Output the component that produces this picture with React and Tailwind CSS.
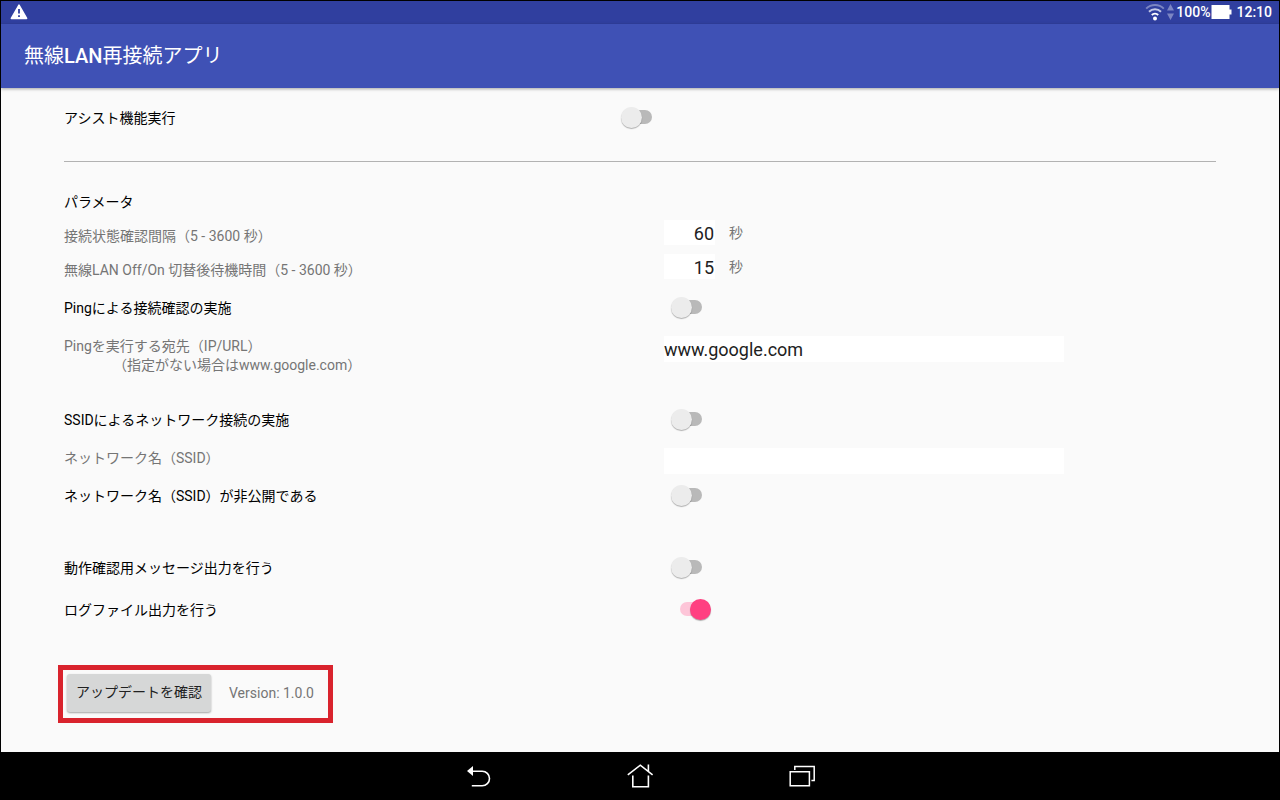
import { useState } from 'react'

function Switch({ id, checked, onChange }) {
  return (
    <input
      id={id}
      type="checkbox"
      role="switch"
      checked={checked}
      onChange={(e) => onChange(e.target.checked)}
      className="grid h-[21px] w-10 shrink-0 cursor-pointer appearance-none items-center before:col-start-1 before:row-start-1 before:h-[14px] before:w-[22px] before:justify-self-center before:rounded-full before:bg-[#b9b9b9] before:content-[''] after:z-10 after:col-start-1 after:row-start-1 after:size-[21px] after:justify-self-start after:rounded-full after:bg-[#ececec] after:shadow-[0_1px_1px_rgba(0,0,0,0.3)] after:content-[''] checked:before:bg-[#fdc5d8] checked:after:justify-self-end checked:after:bg-[#ff4081]"
    />
  )
}

function SwitchRow({ id, label, checked, onChange }) {
  return (
    <div className="grid h-10 grid-cols-[25fr_23fr] items-center">
      <label htmlFor={id} className="text-black">{label}</label>
      <div className="pb-[2px] pl-[7px]">
        <Switch id={id} checked={checked} onChange={onChange} />
      </div>
    </div>
  )
}

function SecondsRow({ id, label, value, onChange }) {
  return (
    <div className="grid h-[34px] grid-cols-[25fr_23fr] items-start">
      <label htmlFor={id} className="leading-8">{label}</label>
      <div className="flex gap-[14px]">
        <input
          id={id}
          type="text"
          inputMode="numeric"
          value={value}
          onChange={(e) => onChange(e.target.value)}
          className="h-[25px] w-[51px] bg-white pt-[2px] pr-px text-right text-lg text-[#212121] outline-none"
        />
        <span className="leading-[27px]">秒</span>
      </div>
    </div>
  )
}

function TextRow({ id, label, value, onChange }) {
  return (
    <div className="grid grid-cols-[25fr_23fr] items-start pt-2">
      <label htmlFor={id} className="pt-px leading-[19px]">{label}</label>
      <input
        id={id}
        type="text"
        value={value}
        onChange={(e) => onChange(e.target.value)}
        className="h-[26px] w-full max-w-[400px] bg-white pt-[2px] text-lg text-[#212121] outline-none"
      />
    </div>
  )
}

function StatusBar() {
  return (
    <div className="flex h-[23px] items-center justify-between bg-[#303f9f] pr-[7px] pb-px pl-[9px] text-sm font-medium text-white">
      <svg width="18" height="16" viewBox="0 0 18 16" aria-hidden="true">
        <path d="M9 1.2 16.6 14.4H1.4Z" fill="#fff" stroke="#fff" strokeWidth="1.6" strokeLinejoin="round" />
        <path d="M9 5v4.6M9 11.2v1.8" stroke="#303f9f" strokeWidth="1.8" />
      </svg>
      <div className="flex items-center">
        <svg width="20" height="18" viewBox="0 0 20 18" fill="none" strokeWidth="2" aria-hidden="true">
          <path d="M1.2 5.6a12.6 12.6 0 0 1 17.6 0" stroke="#7c86c3" />
          <path d="M4 8.8a8.6 8.6 0 0 1 12 0" stroke="#c3c8e6" />
          <path d="M6.8 12a4.6 4.6 0 0 1 6.4 0" stroke="#fff" />
          <circle cx="10" cy="15.4" r="2" fill="#fff" />
        </svg>
        <svg width="11" height="18" viewBox="0 0 11 18" fill="#7c86c3" aria-hidden="true">
          <path d="M5.5 1 9 7.4H2ZM5.5 17 2 10.6h7Z" />
        </svg>
        <span>100%</span>
        <svg width="22" height="14" viewBox="0 0 22 14" fill="#fff" aria-hidden="true">
          <path d="M1.5 0h18v4.5h2v5h-2V14h-18Z" />
        </svg>
        <span className="ml-1">12:10</span>
      </div>
    </div>
  )
}

function NavBar() {
  return (
    <nav className="flex h-12 items-center justify-center gap-[133px] bg-black">
      <button type="button" aria-label="戻る">
        <svg width="28" height="28" viewBox="0 0 28 28" fill="none" stroke="#fff" strokeWidth="1.6">
          <path d="M2 9 8 4v10Z" fill="#fff" stroke="none" />
          <path d="M7 9.2h10.2a7.3 7.3 0 0 1 0 14.6H6.8" />
        </svg>
      </button>
      <button type="button" aria-label="ホーム">
        <svg width="28" height="28" viewBox="0 0 28 28" fill="none" stroke="#fff" strokeWidth="1.6">
          <path d="M1.8 12.8 14.3 3.2 26.6 12.8M22.4 2.4v7" />
          <path d="M6.8 13.4v11.4h15.6V13.4" />
        </svg>
      </button>
      <button type="button" aria-label="最近使ったアプリ">
        <svg width="28" height="28" viewBox="0 0 28 28" fill="none" stroke="#fff" strokeWidth="1.5">
          <path d="M3.2 9.8h19.2v14H3.2Z" />
          <path d="M7.8 8V4.4h19.4v14.2h-2.8" />
        </svg>
      </button>
    </nav>
  )
}

export default function App() {
  const [assist, setAssist] = useState(false)
  const [interval, setInterval] = useState('60')
  const [wait, setWait] = useState('15')
  const [ping, setPing] = useState(false)
  const [host, setHost] = useState('www.google.com')
  const [useSsid, setUseSsid] = useState(false)
  const [ssid, setSsid] = useState('')
  const [hidden, setHidden] = useState(false)
  const [debug, setDebug] = useState(false)
  const [log, setLog] = useState(true)

  return (
    <div className="flex min-h-screen flex-col border-x border-t border-black bg-[#fafafa] font-[Roboto,'Noto_Sans_CJK_JP',sans-serif] text-sm text-[#757575]">
      <StatusBar />
      <header className="z-10 flex h-16 items-center bg-[#3f51b5] px-[23px] shadow-[0_1px_3px_rgba(0,0,0,0.35)]">
        <h1 className="text-xl text-white">
          無線<span className="font-medium">LAN</span>再接続アプリ
        </h1>
      </header>

      <main className="flex-1 px-[63px] pb-7">
        <div className="flex h-[60px] items-center">
          <label htmlFor="assist" className="w-[557px] text-black">アシスト機能実行</label>
          <div className="pb-[2px]">
            <Switch id="assist" checked={assist} onChange={setAssist} />
          </div>
        </div>

        <hr className="mt-[13px] border-[#b2b2b2]" />

        <h2 className="mt-[22px] flex h-9 items-center text-black">パラメータ</h2>
        <SecondsRow id="interval" label="接続状態確認間隔（5 - 3600 秒）" value={interval} onChange={setInterval} />
        <SecondsRow id="wait" label="無線LAN Off/On 切替後待機時間（5 - 3600 秒）" value={wait} onChange={setWait} />

        <SwitchRow id="ping" label="Pingによる接続確認の実施" checked={ping} onChange={setPing} />
        <TextRow
          id="host"
          label={
            <>
              Pingを実行する宛先（IP/URL）
              <span className="block pl-[49px]">（指定がない場合はwww.google.com）</span>
            </>
          }
          value={host}
          onChange={setHost}
        />

        <div className="mt-[25px]">
          <SwitchRow id="use-ssid" label="SSIDによるネットワーク接続の実施" checked={useSsid} onChange={setUseSsid} />
          <TextRow id="ssid" label="ネットワーク名（SSID）" value={ssid} onChange={setSsid} />
          <div className="mt-[2px]">
            <SwitchRow id="hidden" label="ネットワーク名（SSID）が非公開である" checked={hidden} onChange={setHidden} />
          </div>
        </div>

        <div className="mt-8 grid gap-[2px]">
          <SwitchRow id="debug" label="動作確認用メッセージ出力を行う" checked={debug} onChange={setDebug} />
          <SwitchRow id="log" label="ログファイル出力を行う" checked={log} onChange={setLog} />
        </div>

        <div className="mt-[35px] -ml-[6px] flex h-[58px] w-fit items-center gap-[18px] border-[5px] border-[#d9232d] pr-[14px] pb-[2px] pl-1">
          <button
            type="button"
            className="h-[38px] rounded-[3px] bg-[#d6d7d7] px-[9px] pb-[2px] text-[#212121] shadow-[0_1px_2px_rgba(0,0,0,0.35)]"
          >
            アップデートを確認
          </button>
          <span>Version: 1.0.0</span>
        </div>
      </main>

      <NavBar />
    </div>
  )
}
